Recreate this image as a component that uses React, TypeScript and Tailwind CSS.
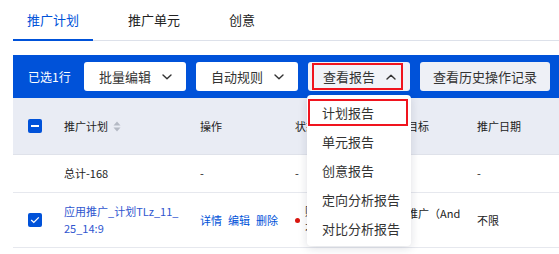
import type { ReactNode } from 'react'

/** 推广计划列表 — 顶部页签、批量操作条、表格，以及展开的“查看报告”下拉菜单。 */

const FONT = { fontFamily: '"Noto Sans CJK SC", "Noto Sans", sans-serif' }

const TABS = ['推广计划', '推广单元', '创意']
const REPORTS = ['计划报告', '单元报告', '创意报告', '定向分析报告', '对比分析报告']

function Chevron({ up = false }: { up?: boolean }) {
  return (
    <svg width="10" height="6" viewBox="0 0 10 6" className="shrink-0">
      <path
        d={up ? 'M1 5 L5 1.2 L9 5' : 'M1 1 L5 4.8 L9 1'}
        fill="none"
        stroke="#333"
        strokeWidth="1.4"
        strokeLinecap="round"
        strokeLinejoin="round"
      />
    </svg>
  )
}

function Checkbox({ kind }: { kind: 'minus' | 'check' }) {
  return (
    <span className="flex h-[14px] w-[14px] items-center justify-center rounded-[2px] bg-[#0052d9]">
      {kind === 'minus' ? (
        <span className="h-[1.5px] w-[8px] bg-white" />
      ) : (
        <svg width="10" height="8" viewBox="0 0 10 8">
          <path d="M1.2 4 L3.8 6.4 L8.8 1.4" fill="none" stroke="white" strokeWidth="1.3" />
        </svg>
      )}
    </span>
  )
}

function SortIcon() {
  return (
    <svg width="8" height="11" viewBox="0 0 8 11" className="ml-[5px]">
      <path d="M4 0.5 L7.5 4.5 L0.5 4.5 Z" fill="#b4b9c4" />
      <path d="M4 10.5 L7.5 6.5 L0.5 6.5 Z" fill="#b4b9c4" />
    </svg>
  )
}

function ActionButton({ children, wide = false, highlight = false }: { children: ReactNode; wide?: boolean; highlight?: boolean }) {
  return (
    <button
      className={
        'relative flex h-[29px] items-center rounded-[3px] text-[13px] text-[#333] ' +
        (wide ? 'w-[130px] justify-center bg-[#eef0f6]' : 'w-[102px] gap-[11px] pl-[15px] ') +
        (highlight ? 'bg-[#f1f3f8]' : wide ? '' : 'bg-white')
      }
    >
      {children}
      {highlight && <span className="pointer-events-none absolute bottom-[1px] left-[4px] right-[7px] top-[1px] border-2 border-[#f0141e]" />}
    </button>
  )
}

export default function App() {
  return (
    <div className="relative h-[254px] w-[559px] overflow-hidden bg-white" style={FONT}>
      {/* 页签 */}
      <div className="ml-[13px] flex h-[41px] gap-[21px] border-b border-[#dde1ea]">
        {TABS.map((t, i) => (
          <div
            key={t}
            className={
              'flex items-center px-[14px] text-[13px] ' +
              (i === 0 ? '-mb-px border-b-2 border-[#0052d9] text-[#0052d9]' : 'text-[#222]')
            }
          >
            {t}
          </div>
        ))}
      </div>

      {/* 批量操作条 */}
      <div className="ml-[13px] mt-[14px] flex h-[43px] items-center bg-[#0052d9] pl-[15px]">
        <span className="w-[56px] text-[12px] text-white">已选1行</span>
        <div className="flex gap-[10px]">
          <ActionButton>批量编辑<Chevron /></ActionButton>
          <ActionButton>自动规则<Chevron /></ActionButton>
          <ActionButton highlight>查看报告<Chevron up /></ActionButton>
          <ActionButton wide>查看历史操作记录</ActionButton>
        </div>
      </div>

      {/* 表格 */}
      <div className="ml-[13px] text-[11px] text-[#222]">
        <div className="flex h-[57px] items-center border-b border-[#dfe2ea] bg-[#e9ecf4]">
          <div className="flex w-[44px] justify-center"><Checkbox kind="minus" /></div>
          <div className="flex w-[136px] items-center pl-[7px]">推广计划<SortIcon /></div>
          <div className="w-[95px] pl-[7px]">操作</div>
          <div className="w-[90px] pl-[7px]">状态</div>
          <div className="w-[92px] pl-[7px]">推广目标</div>
          <div className="flex-1 pl-[7px]">推广日期</div>
        </div>

        <div className="flex h-[38px] items-center border-b border-[#e6e8ee]">
          <div className="w-[44px]" />
          <div className="w-[136px] pl-[7px]">总计-168</div>
          <div className="w-[95px] pl-[7px]">-</div>
          <div className="w-[90px] pl-[7px]">-</div>
          <div className="w-[92px] pl-[7px]" />
          <div className="flex-1 pl-[7px]">-</div>
        </div>

        <div className="flex h-[55px] items-center border-b border-[#e6e8ee] leading-[17px]">
          <div className="flex w-[44px] justify-center"><Checkbox kind="check" /></div>
          <div className="w-[136px] pl-[7px] text-[#2f56cf]">应用推广_计划TLz_11_<br />25_14:9</div>
          <div className="flex w-[95px] gap-[6px] pl-[7px] text-[#0052d9]">
            <span>详情</span><span>编辑</span><span>删除</span>
          </div>
          <div className="flex w-[90px] items-center gap-[5px] pl-[7px]">
            <span className="h-[5px] w-[5px] shrink-0 rounded-full bg-[#d9150e]" />
            <span>账户余额<br />不足</span>
          </div>
          <div className="w-[92px] self-start pt-[12px] pl-[7px]">应用推广（And</div>
          <div className="flex-1 pl-[7px]">不限</div>
        </div>
      </div>

      {/* 查看报告 下拉菜单 */}
      <div className="absolute left-[307px] top-[95px] w-[104px] rounded-[4px] bg-white pb-[3px] pt-[3px] shadow-[0_2px_10px_rgba(20,30,60,0.14)]">
        {REPORTS.map((r, i) => (
          <div key={r} className="relative flex h-[29px] items-center pl-[15px] text-[13px] text-[#333]">
            {r}
            {i === 0 && <span className="pointer-events-none absolute bottom-[1px] left-[1px] right-[3px] top-[1px] border-2 border-[#f0141e]" />}
          </div>
        ))}
      </div>
    </div>
  )
}
